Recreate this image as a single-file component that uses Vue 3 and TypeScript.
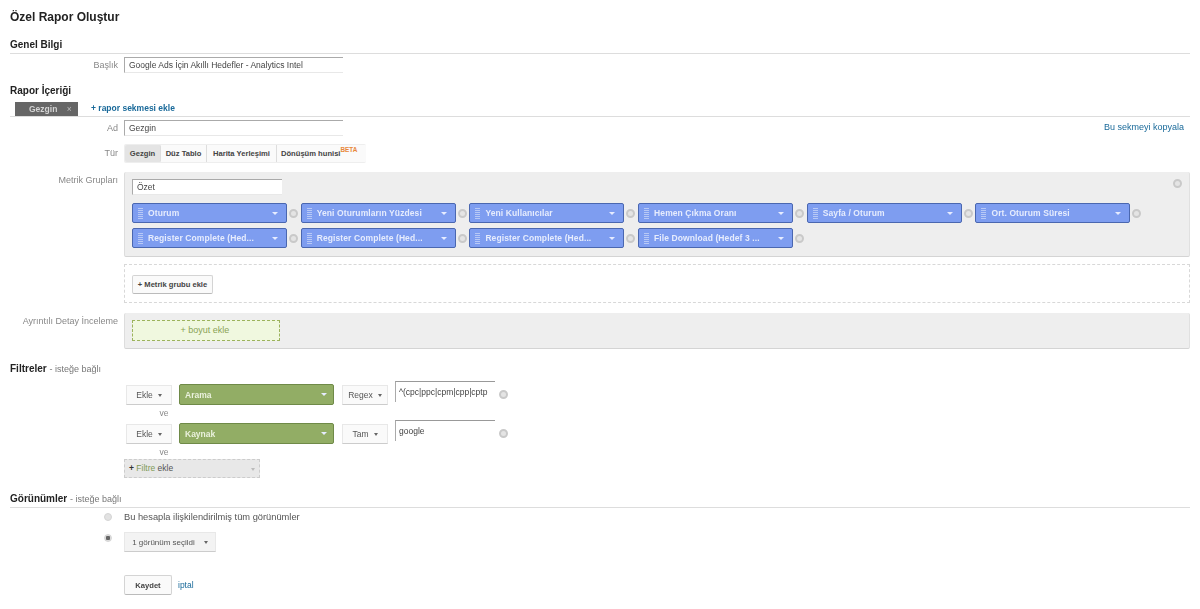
<script setup lang="ts">
const metricRows: string[][] = [
  ['Oturum', 'Yeni Oturumların Yüzdesi', 'Yeni Kullanıcılar', 'Hemen Çıkma Oranı', 'Sayfa / Oturum', 'Ort. Oturum Süresi'],
  ['Register Complete (Hed...', 'Register Complete (Hed...', 'Register Complete (Hed...', 'File Download (Hedef 3 ...'],
]
const tabs = ['Gezgin', 'Düz Tablo', 'Harita Yerleşimi', 'Dönüşüm hunisi']
const filters = [
  { mode: 'Ekle', dim: 'Arama', match: 'Regex', value: '^(cpc|ppc|cpm|cpp|cptp' },
  { mode: 'Ekle', dim: 'Kaynak', match: 'Tam', value: 'google' },
]
</script>

<template>
  <main class="page">
    <h1>Özel Rapor Oluştur</h1>

    <h2 class="section ruled general">Genel Bilgi</h2>
    <div class="row first">
      <label>Başlık</label>
      <input class="text" value="Google Ads İçin Akıllı Hedefler - Analytics Intel" />
    </div>

    <h2 class="section content-title">Rapor İçeriği</h2>
    <div class="tabbar">
      <span class="report-tab">Gezgin <i>×</i></span>
      <a class="add-tab">+ rapor sekmesi ekle</a>
    </div>
    <div class="row name-row">
      <label>Ad</label>
      <input class="text" value="Gezgin" />
      <a class="copy">Bu sekmeyi kopyala</a>
    </div>
    <div class="row type-row">
      <label>Tür</label>
      <div class="types">
        <span v-for="(t, i) in tabs" :key="t" class="type" :class="`type-${i}`">{{ t }}<sup v-if="i === 3">BETA</sup></span>
      </div>
    </div>

    <div class="row group-row">
      <label>Metrik Grupları</label>
      <div class="panel metrics">
        <input class="text group-name" value="Özet" />
        <span class="remove panel-remove"></span>
        <div v-for="(row, r) in metricRows" :key="r" class="chips">
          <div v-for="(m, i) in row" :key="i" class="chip-cell">
            <div class="chip">
              <span class="grip"></span>
              <span class="chip-label">{{ m }}</span>
              <span class="caret"></span>
            </div>
            <span class="remove"></span>
          </div>
        </div>
      </div>
    </div>

    <div class="row add-row">
      <label></label>
      <div class="dashed"><button class="btn">+ Metrik grubu ekle</button></div>
    </div>

    <div class="row drill-row">
      <label>Ayrıntılı Detay İnceleme</label>
      <div class="panel drill"><div class="add-dim">+ boyut ekle</div></div>
    </div>

    <h2 class="section filters-title">Filtreler <span>- isteğe bağlı</span></h2>
    <div class="filters">
      <template v-for="f in filters" :key="f.dim">
        <div class="filter">
          <span class="select mode">{{ f.mode }}<b></b></span>
          <div class="green"><span>{{ f.dim }}</span><span class="caret"></span></div>
          <span class="select match">{{ f.match }}<b></b></span>
          <input class="text value" :value="f.value" />
          <span class="remove"></span>
        </div>
        <div class="and">ve</div>
      </template>
      <div class="add-filter"><strong>+</strong> <em>Filtre</em> ekle<b></b></div>
    </div>

    <h2 class="section ruled views-title">Görünümler <span>- isteğe bağlı</span></h2>
    <div class="views">
      <div class="radio-row"><span class="radio"></span><span>Bu hesapla ilişkilendirilmiş tüm görünümler</span></div>
      <div class="radio-row second">
        <span class="radio checked"></span>
        <span class="select views-select">1 görünüm seçildi<b></b></span>
      </div>
      <div class="actions">
        <button class="btn save">Kaydet</button>
        <a class="cancel">iptal</a>
      </div>
    </div>
  </main>
</template>

<style>
html, body { margin: 0; background: #fff; }
</style>

<style scoped>
.page {
  box-sizing: border-box;
  width: 1200px;
  height: 609px;
  padding: 10px 10px 0;
  overflow: hidden;
  font: 8.5px "Liberation Sans", Arial, sans-serif;
  color: #444;
  filter: blur(0.45px);
}
h1 { margin: 0; font-size: 12px; line-height: 14px; color: #222; }
.section { margin: 0; font-size: 10px; line-height: 12px; color: #222; }
.section span { font-weight: 400; font-size: 9px; color: #777; }
.ruled { padding-bottom: 2px; border-bottom: 1px solid #ddd; }
.general { margin-top: 15px; }

.row { display: flex; align-items: flex-start; position: relative; }
.row > label {
  flex: 0 0 108px;
  margin-right: 6px;
  text-align: right;
  color: #888;
  font-size: 9px;
  line-height: 16px;
  white-space: nowrap;
}
.text {
  box-sizing: border-box;
  width: 219px;
  height: 16px;
  padding: 0 4px;
  border: 0;
  border-left: 1px solid #aaa;
  border-top: 1px solid #aaa;
  border-bottom: 1px solid #e8e8e8;
  background: #fff;
  font: inherit;
  color: #444;
  outline: 0;
}
.first { margin-top: 3px; }
.content-title { margin-top: 12px; }

.tabbar {
  display: flex;
  align-items: flex-end;
  height: 20px;
  padding-left: 5px;
  border-bottom: 1px solid #ddd;
  box-sizing: border-box;
}
.report-tab {
  box-sizing: border-box;
  width: 63px;
  height: 14px;
  padding-left: 14px;
  background: #666;
  color: #d4d4d4;
  font-weight: 700;
  line-height: 14px;
}
.report-tab i { margin-left: 7px; font-style: normal; font-weight: 400; color: #bbb; }
.add-tab { margin-left: 13px; color: #1a6a9a; font-weight: 700; line-height: 15px; }

.name-row { margin-top: 3px; }
.copy { position: absolute; right: 6px; top: 1px; font-size: 9px; color: #1a6a9a; line-height: 12px; }
.type-row { margin-top: 8px; }
.type-row label { line-height: 19px; }
.types {
  display: flex;
  height: 19px;
  box-sizing: border-box;
  padding: 1px 0 1px 1px;
  background: #eee;
  border-radius: 2px;
  overflow: hidden;
}
.type {
  box-sizing: border-box;
  font-weight: 700;
  font-size: 7.6px;
  line-height: 17px;
  text-align: center;
  color: #444;
  border-right: 1px solid #ddd;
  background: #fafafa;
  white-space: nowrap;
}
.type-0 { width: 36px; background: #e4e4e4; border-radius: 2px; }
.type-1 { width: 46px; }
.type-2 { width: 70px; }
.type-3 { width: 89px; padding-left: 4px; text-align: left; border-right: 0; }
.type sup { font-size: 6.4px; line-height: 0; color: #e8883a; font-weight: 700; vertical-align: 4px; }

.group-row { margin-top: 9px; }
.panel {
  position: relative;
  box-sizing: border-box;
  flex: 1;
  background: #eee;
  border-radius: 2px;
  border-bottom: 1px solid #d4d4d4;
  border-right: 1px solid #e0e0e0;
  border-left: 1px solid #ddd;
}
.metrics { height: 85px; padding: 7px 0 0 7px; }
.group-name { display: block; width: 150px; margin-bottom: 8px; }
.chips { display: flex; margin-bottom: 5px; }
.chip-cell { display: flex; align-items: center; width: 168.7px; gap: 2px; }
.chip {
  box-sizing: border-box;
  display: flex;
  align-items: center;
  width: 155px;
  height: 20px;
  padding: 0 8px 0 5px;
  background: #7e9df0;
  border: 1px solid #4a67b0;
  border-radius: 2px;
  color: #e6ecfd;
  font-weight: 700;
}
.grip {
  flex: none;
  width: 5px;
  height: 11px;
  margin-right: 5px;
  background: repeating-linear-gradient(180deg, #b8c9f6 0 1px, transparent 1px 2px);
}
.chip-label { flex: 1; white-space: nowrap; overflow: hidden; letter-spacing: 0.1px; }
.caret {
  flex: none;
  width: 0;
  height: 0;
  border: 3px solid transparent;
  border-top: 3px solid #e6ecff;
  border-bottom: 0;
}
.remove {
  flex: none;
  box-sizing: border-box;
  width: 9px;
  height: 9px;
  border-radius: 50%;
  border: 2px solid #c9c9c9;
  background: #e4e4e4;
}
.panel-remove { position: absolute; top: 7px; right: 7px; }

.add-row { margin-top: 7px; }
.dashed {
  flex: 1;
  box-sizing: border-box;
  height: 39px;
  padding: 10px 7px 0;
  border: 1px dashed #d8d8d8;
}
.btn {
  box-sizing: border-box;
  height: 19px;
  padding: 0;
  border: 1px solid #d4d4d4;
  border-bottom-color: #bbb;
  border-radius: 2px;
  background: #fafafa;
  color: #444;
  white-space: nowrap;
  font: 700 7.6px "Liberation Sans", Arial, sans-serif;
}
.dashed .btn { display: block; width: 81px; }

.drill-row { margin-top: 10px; }
.drill { height: 36px; padding: 7px 7px 0; }
.add-dim {
  box-sizing: border-box;
  width: 148px;
  height: 21px;
  border: 1px dashed #9cb35c;
  background: #f0f8df;
  color: #8aa356;
  font-size: 9px;
  text-align: center;
  line-height: 19px;
  padding-right: 2px;
}

.filters-title { margin-top: 14px; }
.filters { margin: 6px 0 0 114px; }
.filter { display: flex; align-items: flex-start; height: 24px; margin-left: 2px; }
.select {
  box-sizing: border-box;
  display: flex;
  align-items: center;
  justify-content: center;
  gap: 5px;
  height: 20px;
  background: #fafafa;
  border: 1px solid #e8e8e8;
  border-bottom-color: #ccc;
  color: #555;
}
.select b, .add-filter b {
  border: 2.5px solid transparent;
  border-top: 3px solid #666;
  border-bottom: 0;
}
.mode { width: 46px; margin-top: 4px; }
.match { width: 46px; margin: 4px 7px 0 0; }
.green {
  box-sizing: border-box;
  display: flex;
  align-items: center;
  justify-content: space-between;
  width: 155px;
  height: 21px;
  margin: 3px 8px 0 7px;
  padding: 0 6px 0 5px;
  background: #92ad65;
  border: 1px solid #6f8a48;
  border-radius: 2px;
  color: #eaf1dc;
  font-weight: 700;
}
.value { width: 100px; height: 21px; padding: 0 3px; border-bottom: 0; border-top-color: #999; }
.filter .remove { margin: 9px 0 0 4px; }
.and { box-sizing: border-box; width: 58px; height: 15px; padding-left: 22px; text-align: center; line-height: 16px; color: #888; }
.add-filter {
  position: relative;
  box-sizing: border-box;
  width: 136px;
  height: 19px;
  padding-left: 4px;
  background: #e8e8e8;
  border: 1px dashed #ccc;
  line-height: 17px;
  color: #555;
}
.add-filter em { font-style: normal; color: #7f9a55; }
.add-filter strong { color: #333; }
.add-filter b { position: absolute; right: 4px; top: 8px; border-top-color: #bbb; }

.views-title { margin-top: 15px; padding-bottom: 2px; }
.views { margin-left: 94px; }
.radio-row { display: flex; align-items: center; gap: 12px; margin-top: 3px; height: 12px; color: #555; font-size: 9.3px; }
.radio { box-sizing: border-box; flex: none; width: 8px; height: 8px; border-radius: 50%; background: #e2e2e2; border: 1px solid #d4d4d4; }
.radio.checked { background: radial-gradient(circle, #666 0 2px, #ddd 2.5px); }
.second { height: 20px; margin-top: 9px; align-items: flex-start; }
.second .radio { margin-top: 2px; }
.views-select { width: 92px; height: 20px; gap: 9px; background: #f3f3f3; font-size: 8px; }
.actions { display: flex; align-items: center; gap: 6px; margin: 23px 0 0 20px; }
.save { width: 48px; height: 20px; background: #fafafa; }
.cancel { color: #1a6a9a; }
</style>
